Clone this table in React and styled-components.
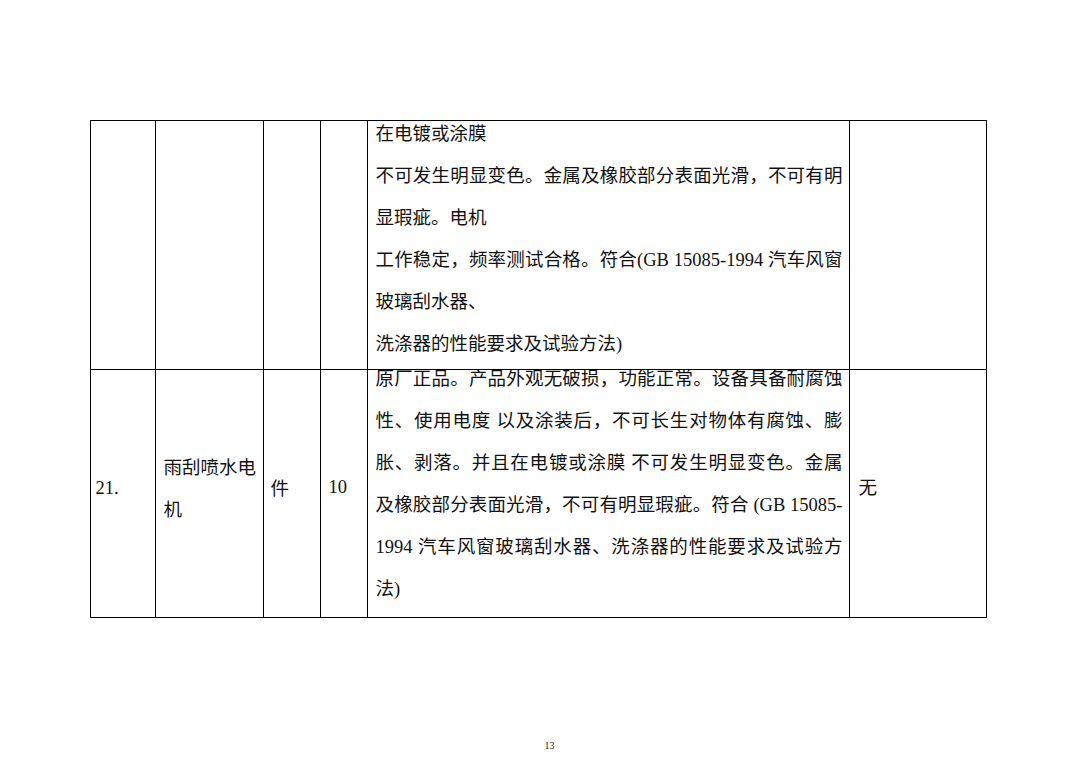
import React from "react";
import styled, { createGlobalStyle } from "styled-components";

const GlobalStyle = createGlobalStyle`
  html, body {
    margin: 0;
    padding: 0;
    background: #ffffff;
  }
  body {
    font-family: "Liberation Serif", "Noto Sans CJK SC", serif;
    color: #000;
  }
`;

const Page = styled.div`
  width: 1077px;
  height: 761px;
  box-sizing: border-box;
  padding-top: 120px;
  display: flex;
  flex-direction: column;
  align-items: center;
  background: #fff;
`;

const Table = styled.table`
  width: 896px;
  margin-left: -1px;
  border-collapse: collapse;
  table-layout: fixed;
  font-family: "Liberation Serif", "Noto Sans CJK SC", serif;
  font-size: 18.5px;
  color: #111;
`;

const Row = styled.tr`
  height: ${(p) => p.$h}px;
`;

const Cell = styled.td`
  border: 1px solid #000;
  padding: ${(p) => p.$pt || 0}px ${(p) => p.$pr || 4}px ${(p) => p.$pb || 0}px
    ${(p) => p.$pl || 8}px;
  vertical-align: ${(p) => (p.$top ? "top" : "middle")};
`;

const Line = styled.div`
  line-height: 18px;
  white-space: nowrap;
  text-align: ${(p) => (p.$full ? "justify" : "left")};
  text-align-last: ${(p) => (p.$full ? "justify" : "left")};
  & + & {
    margin-top: 24px;
  }
`;

const PageNumber = styled.div`
  margin-top: auto;
  padding: 0 0 9px 22px;
  font-family: "Liberation Serif", serif;
  font-size: 10px;
  line-height: 12px;
  color: #222;
`;

const row1 = [
  ["在电镀或涂膜", false],
  ["不可发生明显变色。金属及橡胶部分表面光滑，不可有明", true],
  ["显瑕疵。电机", false],
  ["工作稳定，频率测试合格。符合(GB 15085-1994 汽车风窗", true],
  ["玻璃刮水器、", false],
  ["洗涤器的性能要求及试验方法)", false],
];

const row2 = [
  ["原厂正品。产品外观无破损，功能正常。设备具备耐腐蚀", true],
  ["性、使用电度 以及涂装后，不可长生对物体有腐蚀、膨", true],
  ["胀、剥落。并且在电镀或涂膜 不可发生明显变色。金属", true],
  ["及橡胶部分表面光滑，不可有明显瑕疵。符合 (GB 15085-", true],
  ["1994 汽车风窗玻璃刮水器、洗涤器的性能要求及试验方", true],
  ["法)", false],
];

export default function App() {
  return (
    <>
      <GlobalStyle />
      <Page>
        <Table>
          <colgroup>
            <col style={{ width: 65 }} />
            <col style={{ width: 108 }} />
            <col style={{ width: 57 }} />
            <col style={{ width: 47 }} />
            <col style={{ width: 482 }} />
            <col style={{ width: 137 }} />
          </colgroup>
          <tbody>
            <Row $h={249}>
              <Cell />
              <Cell />
              <Cell />
              <Cell />
              <Cell $top $pt={4} $pr={6}>
                {row1.map(([t, f], i) => (
                  <Line key={i} $full={f}>
                    {t}
                  </Line>
                ))}
              </Cell>
              <Cell />
            </Row>
            <Row $h={248}>
              <Cell $pl={5} $pb={10}>
                21.
              </Cell>
              <Cell $pl={8} $pb={10}>
                <Line>雨刮喷水电</Line>
                <Line>机</Line>
              </Cell>
              <Cell $pl={7} $pb={14}>
                件
              </Cell>
              <Cell $pl={8} $pb={12}>
                10
              </Cell>
              <Cell $top $pt={0} $pr={6}>
                {row2.map(([t, f], i) => (
                  <Line key={i} $full={f}>
                    {t}
                  </Line>
                ))}
              </Cell>
              <Cell $pl={9} $pb={16}>
                无
              </Cell>
            </Row>
          </tbody>
        </Table>
        <PageNumber>13</PageNumber>
      </Page>
    </>
  );
}
